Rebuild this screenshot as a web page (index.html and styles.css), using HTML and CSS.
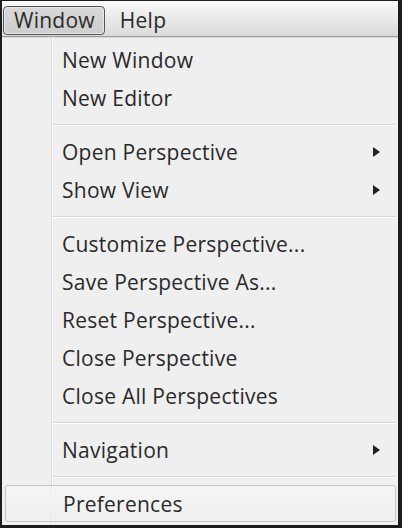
FILE: index.html
```html
<!DOCTYPE html>
<html lang="en">
<head>
  <meta charset="UTF-8">
  <title>Window Menu</title>
  <link rel="stylesheet" href="styles.css">
</head>
<body>
  <div class="frame">
    <div class="menubar">
      <span class="menubar-item active">Window</span>
      <span class="menubar-item">Help</span>
    </div>

    <ul class="menu">
      <li class="item">New Window</li>
      <li class="item">New Editor</li>
      <li class="sep"></li>
      <li class="item sub">Open Perspective <span class="arrow"></span></li>
      <li class="item sub">Show View <span class="arrow"></span></li>
      <li class="sep"></li>
      <li class="item">Customize Perspective...</li>
      <li class="item">Save Perspective As...</li>
      <li class="item">Reset Perspective...</li>
      <li class="item">Close Perspective</li>
      <li class="item">Close All Perspectives</li>
      <li class="sep"></li>
      <li class="item sub">Navigation <span class="arrow"></span></li>
      <li class="sep"></li>
      <li class="item hover">Preferences</li>
    </ul>
  </div>
</body>
</html>
```

FILE: styles.css
```css
html, body {
  margin: 0;
  padding: 0;
  background: #1a1a1a;
}

.frame {
  box-sizing: border-box;
  width: 402px;
  height: 528px;
  border-style: solid;
  border-color: #1c1c1c;
  border-width: 1px 4px 3px 2px;
  background: #efefef;
  font-family: "Open Sans", "DejaVu Sans", sans-serif;
  color: #2a2a2a;
  letter-spacing: 0.25px;
  overflow: hidden;
}

.menubar {
  display: flex;
  align-items: flex-end;
  height: 36px;
  padding: 0 1px 1px;
  box-sizing: border-box;
  background: linear-gradient(#fbfbfb 0%, #eeeeee 35%, #dadada 100%);
  border-bottom: 1px solid #9c9c9c;
  box-shadow: 0 1px 0 #d8d8d8;
}

.menubar-item {
  font-size: 21px;
  line-height: 27px;
  padding: 0 9px 0 10px;
  margin-right: 4px;
  border: 1px solid transparent;
  border-radius: 4px;
}

.menubar-item.active {
  border-color: #555;
  background: linear-gradient(#d8d8d8, #cdcdcd);
  box-shadow: inset 0 0 0 1px #e8e8e8;
}

.menu {
  list-style: none;
  margin: 0;
  padding: 4px 0 0;
  height: 100%;
  background: linear-gradient(to right, transparent 49px, #dadada 49px, #dadada 50px, #fbfbfb 50px, #fbfbfb 51px, transparent 51px);
}

.item {
  display: flex;
  align-items: center;
  justify-content: space-between;
  height: 38px;
  padding: 0 18px 0 60px;
  font-size: 21px;
}

.sep {
  height: 16px;
  margin-left: 51px;
  margin-right: 2px;
  background: linear-gradient(transparent 7px, #d9d9d9 7px, #d9d9d9 8px, #fdfdfd 8px, #fdfdfd 9px, transparent 9px);
}

.arrow {
  width: 0;
  height: 0;
  border-top: 5px solid transparent;
  border-bottom: 5px solid transparent;
  border-left: 7px solid #222;
}

.item.hover {
  margin: 0 2px 0 3px;
  padding-left: 57px;
  height: 35px;
  border: 1px solid #c4c4c4;
  border-radius: 3px;
  background: linear-gradient(rgba(248, 248, 248, 0.7), rgba(238, 238, 238, 0.7));
}
```
